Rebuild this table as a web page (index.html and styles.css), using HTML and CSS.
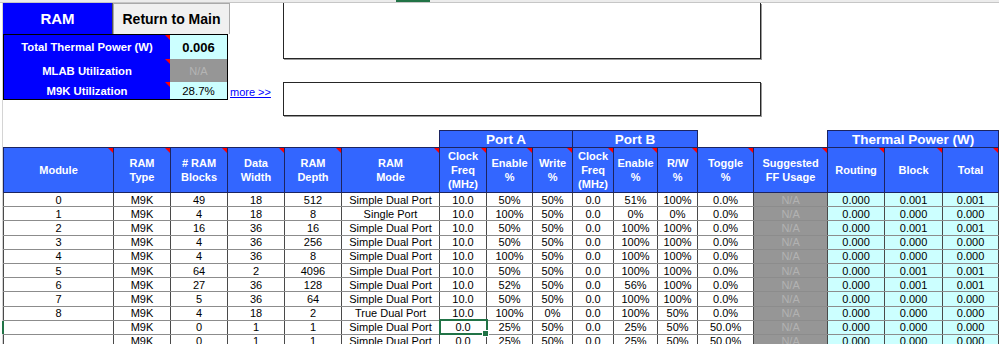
FILE: index.html
```html
<!DOCTYPE html>
<html lang="en">
<head>
<meta charset="utf-8">
<title>RAM</title>
<link rel="stylesheet" href="styles.css">
</head>
<body>
<div class="colbar"><div class="colbar-sel"></div></div>
<div class="sheet">
  <div class="top">
    <div class="panel">
      <div class="title-row">
        <div class="title">RAM</div>
        <div class="btn">Return to Main</div>
      </div>
      <div class="stats">
        <div class="stat-grid">
          <div class="stat-label note r1">Total Thermal Power (W)</div>
          <div class="stat-val total r1">0.006</div>
          <div class="stat-label note r2">MLAB Utilization</div>
          <div class="stat-val na r2">N/A</div>
          <div class="stat-label note r3">M9K Utilization</div>
          <div class="stat-val r3">28.7%</div>
        </div>
        <a class="more" href="#">more &gt;&gt;</a>
      </div>
    </div>
    <div class="boxes">
      <div class="box box-notes"></div>
      <div class="box box-msg"></div>
    </div>
  </div>

  <table class="grid">
    <colgroup>
      <col style="width:110px"><col style="width:57px"><col style="width:57px"><col style="width:57px"><col style="width:57px">
      <col style="width:98px"><col style="width:47px"><col style="width:46px"><col style="width:40px">
      <col style="width:41px"><col style="width:44px"><col style="width:40px">
      <col style="width:56px"><col style="width:74px"><col style="width:57px"><col style="width:58px"><col style="width:56px">
    </colgroup>
    <thead>
      <tr class="grp">
        <td colspan="6" class="blank"></td>
        <td colspan="3" class="port">Port A</td>
        <td colspan="3" class="port">Port B</td>
        <td colspan="2" class="blank"></td>
        <td colspan="3" class="port">Thermal Power (W)</td>
      </tr>
      <tr class="hdr">
        <th>Module</th>
        <th>RAM<br>Type</th>
        <th># RAM<br>Blocks</th>
        <th>Data<br>Width</th>
        <th>RAM<br>Depth</th>
        <th>RAM<br>Mode</th>
        <th>Clock<br>Freq<br>(MHz)</th>
        <th>Enable<br>%</th>
        <th>Write<br>%</th>
        <th>Clock<br>Freq<br>(MHz)</th>
        <th>Enable<br>%</th>
        <th>R/W<br>%</th>
        <th>Toggle<br>%</th>
        <th>Suggested<br>FF Usage</th>
        <th>Routing</th>
        <th>Block</th>
        <th>Total</th>
      </tr>
    </thead>
    <tbody>
      <tr><td>0</td><td>M9K</td><td>49</td><td>18</td><td>512</td><td>Simple Dual Port</td><td>10.0</td><td>50%</td><td>50%</td><td>0.0</td><td>51%</td><td>100%</td><td>0.0%</td><td class="na">N/A</td><td class="c">0.000</td><td class="c">0.001</td><td class="c">0.001</td></tr>
      <tr><td>1</td><td>M9K</td><td>4</td><td>18</td><td>8</td><td>Single Port</td><td>10.0</td><td>100%</td><td>50%</td><td>0.0</td><td>0%</td><td>0%</td><td>0.0%</td><td class="na">N/A</td><td class="c">0.000</td><td class="c">0.000</td><td class="c">0.000</td></tr>
      <tr><td>2</td><td>M9K</td><td>16</td><td>36</td><td>16</td><td>Simple Dual Port</td><td>10.0</td><td>50%</td><td>50%</td><td>0.0</td><td>100%</td><td>100%</td><td>0.0%</td><td class="na">N/A</td><td class="c">0.000</td><td class="c">0.001</td><td class="c">0.001</td></tr>
      <tr><td>3</td><td>M9K</td><td>4</td><td>36</td><td>256</td><td>Simple Dual Port</td><td>10.0</td><td>50%</td><td>50%</td><td>0.0</td><td>100%</td><td>100%</td><td>0.0%</td><td class="na">N/A</td><td class="c">0.000</td><td class="c">0.000</td><td class="c">0.000</td></tr>
      <tr><td>4</td><td>M9K</td><td>4</td><td>36</td><td>8</td><td>Simple Dual Port</td><td>10.0</td><td>100%</td><td>50%</td><td>0.0</td><td>100%</td><td>100%</td><td>0.0%</td><td class="na">N/A</td><td class="c">0.000</td><td class="c">0.000</td><td class="c">0.000</td></tr>
      <tr><td>5</td><td>M9K</td><td>64</td><td>2</td><td>4096</td><td>Simple Dual Port</td><td>10.0</td><td>50%</td><td>50%</td><td>0.0</td><td>100%</td><td>100%</td><td>0.0%</td><td class="na">N/A</td><td class="c">0.000</td><td class="c">0.001</td><td class="c">0.001</td></tr>
      <tr><td>6</td><td>M9K</td><td>27</td><td>36</td><td>128</td><td>Simple Dual Port</td><td>10.0</td><td>52%</td><td>50%</td><td>0.0</td><td>56%</td><td>100%</td><td>0.0%</td><td class="na">N/A</td><td class="c">0.000</td><td class="c">0.001</td><td class="c">0.001</td></tr>
      <tr><td>7</td><td>M9K</td><td>5</td><td>36</td><td>64</td><td>Simple Dual Port</td><td>10.0</td><td>50%</td><td>50%</td><td>0.0</td><td>100%</td><td>100%</td><td>0.0%</td><td class="na">N/A</td><td class="c">0.000</td><td class="c">0.000</td><td class="c">0.000</td></tr>
      <tr><td>8</td><td>M9K</td><td>4</td><td>18</td><td>2</td><td>True Dual Port</td><td>10.0</td><td>100%</td><td>0%</td><td>0.0</td><td>100%</td><td>50%</td><td>0.0%</td><td class="na">N/A</td><td class="c">0.000</td><td class="c">0.000</td><td class="c">0.000</td></tr>
      <tr><td class="rowsel"></td><td>M9K</td><td>0</td><td>1</td><td>1</td><td>Simple Dual Port</td><td class="sel">0.0</td><td>25%</td><td>50%</td><td>0.0</td><td>25%</td><td>50%</td><td>50.0%</td><td class="na">N/A</td><td class="c">0.000</td><td class="c">0.000</td><td class="c">0.000</td></tr>
      <tr><td></td><td>M9K</td><td>0</td><td>1</td><td>1</td><td>Simple Dual Port</td><td>0.0</td><td>25%</td><td>50%</td><td>0.0</td><td>25%</td><td>50%</td><td>50.0%</td><td class="na">N/A</td><td class="c">0.000</td><td class="c">0.000</td><td class="c">0.000</td></tr>
    </tbody>
  </table>
</div>
</body>
</html>
```

FILE: styles.css
```css
* { box-sizing: border-box; }

html, body {
  margin: 0;
  padding: 0;
}

body {
  width: 999px;
  height: 344px;
  overflow: hidden;
  background: #fff;
  color: #000;
  font-family: "Liberation Sans", Arial, sans-serif;
}

/* column header strip along the top edge */
.colbar {
  height: 3px;
  background: #ececec;
  border-bottom: 1px solid #c6c6c6;
}

.colbar-sel {
  margin-left: 396px;
  width: 34px;
  height: 2px;
  background: #217346;
}

.sheet {
  margin-left: 2px;
  border-left: 1px solid #d4d4d4;
  height: 341px;
}

/* ---------- top area ---------- */
.top {
  display: flex;
  height: 127px;
}

.panel {
  width: 280px;
  flex: none;
}

.title-row {
  display: flex;
  height: 31px;
}

.title {
  width: 110px;
  background: #0000ff;
  color: #fff;
  font-weight: bold;
  font-size: 15px;
  display: flex;
  align-items: center;
  justify-content: center;
  border-right: 1px solid #555;
}

.btn {
  width: 117px;
  background: #f0f0f0;
  border: 1px solid #a9a9a9;
  border-bottom: none;
  font-weight: bold;
  font-size: 14px;
  display: flex;
  align-items: center;
  justify-content: center;
}

.stats {
  display: flex;
  align-items: flex-end;
}

.stat-grid {
  display: grid;
  grid-template-columns: 166px 57px;
  grid-template-rows: 24px 23px 17px;
  border: 1px solid #000;
}

.stat-label {
  background: #0000ff;
  color: #fff;
  font-weight: bold;
  font-size: 11.3px;
  display: flex;
  align-items: center;
  justify-content: center;
  position: relative;
}

.stat-val {
  background: #ccffff;
  font-size: 11.5px;
  display: flex;
  align-items: center;
  justify-content: center;
}

.stat-val.total {
  font-weight: bold;
  font-size: 13px;
}

.stat-val.na {
  background: #969696;
  color: #b4b4b4;
  font-size: 11px;
}

/* comment marker in the top-right corner of a cell */
.note::after,
.hdr th::after {
  content: "";
  position: absolute;
  top: 0;
  right: 0;
  border-top: 5px solid #ff0000;
  border-left: 5px solid transparent;
}

.more {
  font-size: 11px;
  line-height: 12px;
  color: #0000ff;
  text-decoration: underline;
  margin: 0 0 2px 2px;
}

.boxes {
  display: flex;
  flex-direction: column;
  width: 478px;
}

.box {
  border: 1px solid #262626;
  box-shadow: 1px 1px 0 #9a9a9a;
  background: #fff;
}

.box-notes {
  height: 56px;
  border-top: none;
}

.box-msg {
  margin-top: 23px;
  height: 34px;
}

/* ---------- data table ---------- */
.grid {
  border-collapse: collapse;
  table-layout: fixed;
  width: 995px;
  font-size: 11px;
}

.grp td {
  height: 17px;
  padding: 0;
}

.grp .port {
  background: #3366ff;
  color: #fff;
  font-weight: bold;
  font-size: 13.5px;
  text-align: center;
  border: 1px solid #1c2460;
}

.hdr th {
  height: 45px;
  padding: 0 1px;
  background: #3366ff;
  color: #fff;
  font-weight: bold;
  font-size: 11px;
  line-height: 14px;
  border: 1px solid #1c2460;
  position: relative;
}

tbody td {
  height: 14.2px;
  padding: 0;
  text-align: center;
  line-height: 12px;
  white-space: nowrap;
  border-left: 1px solid #4a4a4a;
  border-right: 1px solid #4a4a4a;
  border-bottom: 1px solid #8c8c8c;
}

tbody td.c {
  background: #ccffff;
}

tbody td.na {
  background: #969696;
  color: #b2b2b2;
}

tbody td.sel {
  position: relative;
  outline: 2px solid #217346;
  outline-offset: -1px;
}

tbody td.sel::after {
  content: "";
  position: absolute;
  right: -3px;
  bottom: -3px;
  width: 5px;
  height: 5px;
  background: #217346;
  border: 1px solid #fff;
}

tbody td.rowsel {
  position: relative;
}

tbody td.rowsel::before {
  content: "";
  position: absolute;
  left: -2px;
  top: 0;
  bottom: 0;
  width: 2px;
  background: #217346;
}
```
